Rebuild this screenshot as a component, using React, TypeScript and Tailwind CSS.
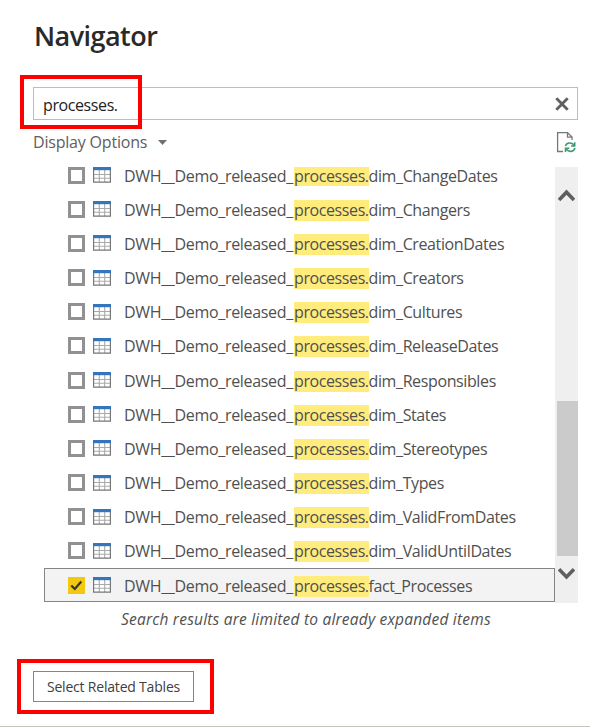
const rows = [
  { suffix: 'dim_ChangeDates', width: 131 },
  { suffix: 'dim_Changers', width: 103 },
  { suffix: 'dim_CreationDates', width: 137 },
  { suffix: 'dim_Creators', width: 95.5 },
  { suffix: 'dim_Cultures', width: 94 },
  { suffix: 'dim_ReleaseDates', width: 131 },
  { suffix: 'dim_Responsibles', width: 129 },
  { suffix: 'dim_States', width: 78.5 },
  { suffix: 'dim_Stereotypes', width: 120 },
  { suffix: 'dim_Types', width: 77 },
  { suffix: 'dim_ValidFromDates', width: 149.5 },
  { suffix: 'dim_ValidUntilDates', width: 146 },
  { suffix: 'fact_Processes', width: 103.5, selected: true },
];

function TableIcon() {
  return (
    <svg width="18" height="16" viewBox="0 0 18 16" className="ml-[8px] shrink-0">
      <rect x="0.5" y="0.5" width="17" height="15" fill="#fff" />
      <path d="M1 7.5H17M1 11.2H17M6.3 3V15M11.7 3V15" stroke="#aaa" strokeWidth="1.1" />
      <path d="M0.6 3V15.2H17.4V3" fill="none" stroke="#777" strokeWidth="1.2" />
      <rect width="18" height="3.2" fill="#3475bb" />
    </svg>
  );
}

function Checkbox({ checked }: { checked?: boolean }) {
  return checked ? (
    <span className="h-[17px] w-[17px] shrink-0 bg-[#f2c811]">
      <svg width="17" height="17" viewBox="0 0 17 17">
        <path d="M3.3 8.5L6.8 12L13.3 4.5" fill="none" stroke="#333" strokeWidth="2.2" />
      </svg>
    </span>
  ) : (
    <span className="h-[17px] w-[17px] shrink-0 border-[3px] border-[#919191] bg-white" />
  );
}

function Row({ suffix, width, selected, first }: { suffix: string; width: number; selected?: boolean; first?: boolean }) {
  return (
    <div
      className={
        'flex h-[34.18px] shrink-0 items-center border-[1.5px] pl-[23px] ' +
        (selected ? 'border-[#858585] bg-[#f3f3f3]' : 'border-transparent')
      }
    >
      <Checkbox checked={selected} />
      <TableIcon />
      <div className="ml-[13px] mt-[2px] flex items-center whitespace-nowrap text-[16px] leading-[21px] text-[#505050]">
        <span className="w-[170px] tracking-[-0.33px]">DWH__Demo_released_</span>
        <span className={'w-[74.5px] bg-[#ffec7c] tracking-[-0.4px] ' + (first ? 'h-[19px] leading-[19px]' : 'h-[21px]')}>processes.</span>
        <span className="tracking-[-0.38px]" style={{ width }}>{suffix}</span>
      </div>
    </div>
  );
}

export default function App() {
  return (
    <div className="relative flex h-[727px] w-[590px] flex-col overflow-hidden border-b border-[#c5c5bd] bg-white font-['Open_Sans','Noto_Sans',sans-serif]">
      <h1 className="ml-[34px] mt-[16px] h-[40px] text-[27px] font-semibold leading-[40px] tracking-[-0.55px] text-[#292929]">Navigator</h1>
      <div className="ml-[33px] mt-[31px] flex h-[33px] w-[545px] items-center justify-between border border-[#bdbdbd] pl-[9px] pr-[8px]">
        <span className="mt-[2px] text-[16px] tracking-[-0.4px] text-[#222]">processes.</span>
        <svg width="14" height="14" viewBox="0 0 14 14">
          <path d="M1.3 1.3L12.7 12.7M12.7 1.3L1.3 12.7" stroke="#606060" strokeWidth="2.8" />
        </svg>
      </div>
      <div className="ml-[33px] mt-[9px] flex h-[26px] w-[544px] items-center text-[16px] text-[#606060]">
        <span className="w-[115px] whitespace-nowrap tracking-[-0.2px]">Display Options</span>
        <svg width="9" height="5" viewBox="0 0 9 5" className="ml-[10px]">
          <path d="M0 0H9L4.5 5Z" fill="#707070" />
        </svg>
        <svg width="21" height="22" viewBox="0 0 21 22" className="ml-auto">
          <path d="M7 20.5H1.6V1.6H11.5L16 6V9M11.5 1.6V6.2H16" fill="none" stroke="#777" strokeWidth="1.3" />
          <path d="M9.5 15C10.5 11.5 15.5 11 18 14M18.7 11.3V15H15M19 17C17.8 21 13 21.5 10.3 18.3M9.5 21V17.2H13.4" fill="none" stroke="#439b76" strokeWidth="1.6" />
        </svg>
      </div>
      <div className="ml-[44px] mt-[12px] flex h-[436px] w-[534px] justify-between">
        <div className="-mt-[9px] flex w-[511px] flex-col">
          {rows.map((row, index) => <Row key={row.suffix} {...row} first={index === 0} />)}
        </div>
        <div className="flex w-[23px] flex-col items-center bg-[#efefef]">
          <svg width="17" height="14" viewBox="0 0 17 14" className="mt-[21px]">
            <path d="M1 12L8.5 4.2L16 12" fill="none" stroke="#5f5f5f" strokeWidth="3.6" />
          </svg>
          <div className="ml-px mt-[199px] h-[155px] w-[21px] bg-[#cbcbcb]" />
          <svg width="17" height="14" viewBox="0 0 17 14" className="mt-[11px]">
            <path d="M1 2.2L8.5 10L16 2.2" fill="none" stroke="#5f5f5f" strokeWidth="3.6" />
          </svg>
        </div>
      </div>
      <p className="ml-[121px] mt-[4px] h-[24px] w-[370px] whitespace-nowrap text-[15.5px] italic leading-[24px] tracking-[0.21px] text-[#505050]">
        Search results are limited to already expanded items
      </p>
      <button className="ml-[33px] mt-[40px] h-[31px] w-[161px] whitespace-nowrap border border-[#858585] text-[14px] tracking-[-0.2px] text-[#404040]">
        Select Related Tables
      </button>
      <div className="absolute left-[20px] top-[75px] h-[54px] w-[122px] border-4 border-[#ff0000]" />
      <div className="absolute left-[17px] top-[659px] h-[55px] w-[197px] border-4 border-[#ff0000]" />
    </div>
  );
}
